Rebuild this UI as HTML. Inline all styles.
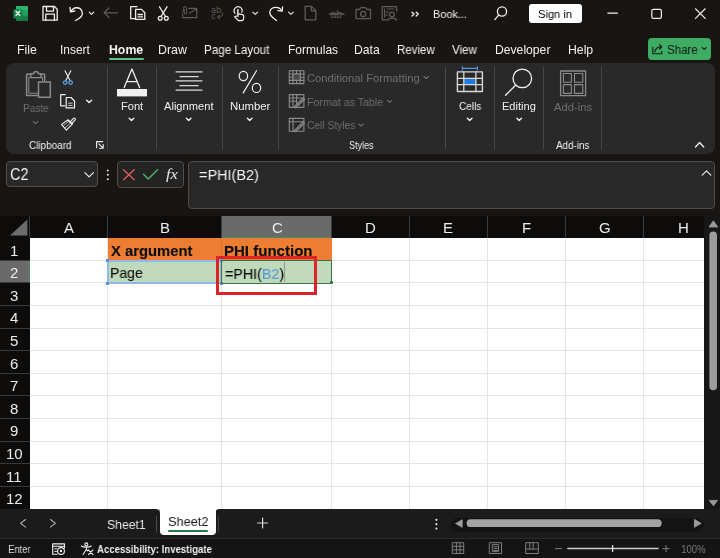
<!DOCTYPE html>
<html><head><meta charset="utf-8">
<style>
*{margin:0;padding:0;box-sizing:border-box}
html,body{width:720px;height:558px;overflow:hidden;background:#181512;font-family:"Liberation Sans",sans-serif;position:relative}
.a{position:absolute;white-space:pre;line-height:1;will-change:transform}
.t{color:#f2f2f2;font-size:12px}
.sep{position:absolute;top:67px;width:1px;height:82px;background:#474747}
.dis{color:#707070}
svg{position:absolute;overflow:visible;left:0;top:0}
</style></head><body>

<svg width="720" height="30" style="left:0;top:0">
<g fill="none" stroke-width="1.3" stroke-linejoin="round" stroke-linecap="round">
<!-- excel logo -->
<rect x="16" y="6" width="12" height="14.7" rx="1" fill="#1d9456" stroke="none"/>
<rect x="16" y="6" width="12" height="4.6" rx="1" fill="#2db46e" stroke="none"/>
<rect x="22" y="10.6" width="6" height="5" fill="#22a05f" stroke="none"/>
<rect x="16" y="15.8" width="12" height="4.9" rx="1" fill="#177a45" stroke="none"/>
<rect x="13.4" y="9.2" width="9" height="9.2" rx="1" fill="#17854b" stroke="none"/>
<path d="M16 11.2 L19.8 15.4 M19.8 11.2 L16 15.4" stroke="#f4fff8" stroke-width="1.3"/>
<!-- save -->
<path d="M43 6.5 H54.5 L57.2 9.2 V20.2 H43 Z" stroke="#f0f0f0"/>
<path d="M46.5 6.5 V11.2 H53.5 V6.5" stroke="#f0f0f0"/>
<path d="M45.8 20.2 V14.2 H54.4 V20.2" stroke="#f0f0f0"/>
<!-- undo -->
<path d="M71 11.5 C73 7 80 6 82 11.5 C83.5 15.5 80 18.5 75.5 20.5" stroke="#f0f0f0"/>
<path d="M70 7.5 L70.5 11.8 L74.8 11" stroke="#f0f0f0"/>
<path d="M89.2 12.2 L91.5 14.3 L93.8 12.2" stroke="#f0f0f0" stroke-width="1.1"/>
<!-- back arrow disabled -->
<path d="M104.2 12.8 H117.6 M109 8 L104.2 12.8 L109 17.6" stroke="#5c5c5c"/>
<!-- copy -->
<path d="M137 6.6 H130.7 V18.6 H135" stroke="#f0f0f0"/>
<path d="M135.6 9.4 H141.5 L144.8 12.7 V19.4 H135.6 Z" stroke="#f0f0f0"/>
<path d="M138 14.5 H142.5 M138 16.8 H142.5" stroke="#f0f0f0"/>
<!-- scissors -->
<path d="M159.5 6.8 L165.5 16.5 M167 6.8 L161 16.5" stroke="#f0f0f0"/>
<circle cx="160.2" cy="18.3" r="1.9" stroke="#f0f0f0"/>
<circle cx="166.3" cy="18.3" r="1.9" stroke="#f0f0f0"/>
<!-- email attach disabled -->
<path d="M182.6 13.6 V17.6 H196.8 V8.4 H189" stroke="#5c5c5c" stroke-width="1.1"/>
<path d="M189.3 13.4 L196.4 8.7 M192.5 8.5 H196.6 V12" stroke="#5c5c5c" stroke-width="1.1"/>
<path d="M183.3 12 V8.4 A1.7 1.7 0 0 1 186.7 8.4 V13 A1.2 1.2 0 0 1 184.3 13 V9.2" stroke="#5c5c5c" stroke-width="1"/>
<!-- spelling abc disabled -->
<text x="210.9" y="12.6" fill="#5c5c5c" style="font-family:'Liberation Sans';font-size:9px;letter-spacing:0.3px">ab</text>
<text x="211.2" y="19.3" fill="#5c5c5c" style="font-family:'Liberation Sans';font-size:9px">c</text>
<path d="M222.3 12.8 C223.5 15 222 17.2 218 17.2 M219.8 15.2 L217.6 17.2 L219.8 19.2" stroke="#5c5c5c" stroke-width="1"/>
<!-- touch -->
<path d="M235 13.2 A4 4 0 1 1 241.8 12.2" stroke="#f0f0f0" stroke-width="1.2"/>
<path d="M237.9 16.5 V9.6" stroke="#f0f0f0" stroke-width="1.4"/>
<path d="M238.2 13.8 L241.7 14.4 A2.1 2.1 0 0 1 243.7 16.5 V18.2 A2.5 2.5 0 0 1 241.2 20.7 H238.6 L234.6 16.9 L236.4 16" stroke="#f0f0f0" stroke-width="1.2"/>
<path d="M252.8 12.2 L255.2 14.3 L257.6 12.2" stroke="#f0f0f0" stroke-width="1.1"/>
<!-- redo -->
<path d="M281.5 10.5 C279.5 6.5 272 6 270 11 C268.5 14.5 272 17.5 276.5 20.5" stroke="#f0f0f0"/>
<path d="M282.6 6.8 L282.2 11.2 L277.8 10.6" stroke="#f0f0f0"/>
<path d="M288.5 12.2 L290.9 14.3 L293.3 12.2" stroke="#f0f0f0" stroke-width="1.1"/>
<!-- doc disabled -->
<path d="M305.2 6.4 H311.5 L315.8 10.7 V19.8 H305.2 Z M311.3 6.4 V10.8 H315.8" stroke="#5c5c5c"/>
<!-- ab strike disabled -->
<text x="330.5" y="18.2" fill="#5c5c5c" style="font-family:'Liberation Sans';font-size:10.5px">ab</text>
<path d="M329.5 14 H344" stroke="#5c5c5c"/>
<!-- camera disabled -->
<path d="M356 9.5 H359.5 L360.8 7.6 H365.5 L366.8 9.5 H370.5 V18.6 H356 Z" stroke="#5c5c5c"/>
<circle cx="363.2" cy="14" r="2.6" stroke="#5c5c5c"/>
<!-- form disabled -->
<path d="M382.2 6.6 H396.6 V11 M382.2 6.6 V19.8 H387" stroke="#5c5c5c"/>
<path d="M384.5 9 V17.5 M387 9 H394 M384.5 12 H389 M384.5 15 H388" stroke="#5c5c5c" stroke-width="1"/>
<circle cx="392" cy="14.5" r="2.3" stroke="#5c5c5c"/>
<path d="M387.8 20.2 C388.5 17.5 395.5 17.5 396.5 20.2" stroke="#5c5c5c"/>
<!-- >> -->
<path d="M412 12.2 L414 14.1 L412 16 M416.2 12.2 L418.2 14.1 L416.2 16" stroke="#f0f0f0" stroke-width="1.4"/>
<!-- search -->
<circle cx="502" cy="11.5" r="4.6" stroke="#f0f0f0"/>
<path d="M498.8 14.8 L494.8 19.6" stroke="#f0f0f0"/>
<!-- window controls -->
<path d="M607.8 13.1 H617.4" stroke="#f0f0f0" stroke-width="1.2"/>
<rect x="651.8" y="9.3" width="9.6" height="9" rx="1.6" stroke="#f0f0f0" stroke-width="1.2"/>
<path d="M695.5 8.8 L705.2 18.4 M705.2 8.8 L695.5 18.4" stroke="#f0f0f0" stroke-width="1.2"/>
</g></svg>
<div class="a" style="left:433.48px;top:8.82px;font-size:11.2px;color:#f0f0f0;font-weight:normal;transform:scaleX(0.9720);transform-origin:0.92px 0;">Book...</div>
<div class="a" style="left:529.00px;top:3.90px;width:52.70px;height:18.90px;background:#ffffff;border-radius:3px"></div>
<div class="a" style="left:538.38px;top:8.77px;font-size:11.5px;color:#000000;font-weight:normal;transform:scaleX(0.9677);transform-origin:0.52px 0;">Sign in</div>
<div class="a" style="left:17.32px;top:44.53px;font-size:11.9px;color:#f2f2f2;font-weight:normal;transform:scaleX(1.0413);transform-origin:0.98px 0;">File</div>
<div class="a" style="left:60.20px;top:44.53px;font-size:11.9px;color:#f2f2f2;font-weight:normal;transform:scaleX(1.0043);transform-origin:1.10px 0;">Insert</div>
<div class="a" style="left:108.50px;top:44.53px;font-size:11.9px;color:#f2f2f2;font-weight:bold;transform:scaleX(1.0358);transform-origin:0.80px 0;">Home</div>
<div class="a" style="left:158.32px;top:44.53px;font-size:11.9px;color:#f2f2f2;font-weight:normal;transform:scaleX(1.0439);transform-origin:0.98px 0;">Draw</div>
<div class="a" style="left:204.02px;top:44.53px;font-size:11.9px;color:#f2f2f2;font-weight:normal;transform:scaleX(0.9777);transform-origin:0.98px 0;">Page Layout</div>
<div class="a" style="left:288.02px;top:44.53px;font-size:11.9px;color:#f2f2f2;font-weight:normal;transform:scaleX(1.0106);transform-origin:0.98px 0;">Formulas</div>
<div class="a" style="left:354.32px;top:44.53px;font-size:11.9px;color:#f2f2f2;font-weight:normal;transform:scaleX(1.0265);transform-origin:0.98px 0;">Data</div>
<div class="a" style="left:396.52px;top:44.53px;font-size:11.9px;color:#f2f2f2;font-weight:normal;transform:scaleX(0.9640);transform-origin:0.98px 0;">Review</div>
<div class="a" style="left:452.05px;top:44.53px;font-size:11.9px;color:#f2f2f2;font-weight:normal;transform:scaleX(0.9740);transform-origin:0.05px 0;">View</div>
<div class="a" style="left:494.72px;top:44.53px;font-size:11.9px;color:#f2f2f2;font-weight:normal;transform:scaleX(1.0232);transform-origin:0.98px 0;">Developer</div>
<div class="a" style="left:568.22px;top:44.53px;font-size:11.9px;color:#f2f2f2;font-weight:normal;transform:scaleX(1.0305);transform-origin:0.98px 0;">Help</div>
<div class="a" style="left:108.80px;top:57.70px;width:34.50px;height:2.20px;background:#5cc28a;border-radius:1px"></div>
<div class="a" style="left:648.10px;top:37.90px;width:63.30px;height:21.70px;background:#3fac66;border-radius:4px"></div>
<div class="a" style="left:666.76px;top:43.74px;font-size:12px;color:#0f1a12;font-weight:normal;transform:scaleX(0.9598);transform-origin:0.54px 0;">Share</div>
<svg width="720" height="60" style="left:0;top:0"><g fill="none" stroke="#141414" stroke-width="1.1" stroke-linejoin="round" stroke-linecap="round">
<path d="M652.8 47.2 V53.8 H661.8 V51.2"/>
<path d="M654.8 51.8 C655.5 48.5 657.5 46.8 661.5 46.8 M659.5 44.6 L661.8 46.8 L659.5 49"/>
<path d="M702.2 47.6 L704.2 49.4 L706.2 47.6"/>
</g></svg>
<div class="a" style="left:5.60px;top:62.90px;width:709.40px;height:91.00px;background:#292929;border-radius:8px"></div>
<div class="sep" style="left:106.70px"></div>
<div class="sep" style="left:156.00px"></div>
<div class="sep" style="left:221.70px"></div>
<div class="sep" style="left:277.70px"></div>
<div class="sep" style="left:444.70px"></div>
<div class="sep" style="left:493.90px"></div>
<div class="sep" style="left:543.20px"></div>
<div class="sep" style="left:600.70px"></div>
<svg width="720" height="160" style="left:0;top:0"><g fill="none" stroke-linejoin="round" stroke-linecap="round">
<!-- paste -->
<path d="M30.5 74.3 H26.6 V95.4 H37.6 M44.6 80.8 V74.3 H41" stroke="#8a8a8a" stroke-width="1.5"/>
<path d="M30.3 77.2 H28.8 V93.2 H37.6 M42.5 80.8 V77.2 H41.2" stroke="#8a8a8a" stroke-width="1"/>
<path d="M30.8 77.6 V73.8 H33.6 A2.3 2.3 0 0 1 38.2 73.8 H41 V77.6 Z" stroke="#8a8a8a" stroke-width="1.4"/>
<rect x="38.5" y="81.9" width="11.8" height="15.4" stroke="#8a8a8a" stroke-width="1.5"/>
<path d="M33.2 121.5 L35.5 123.6 L37.8 121.5" stroke="#6f6f6f" stroke-width="1.1"/>
<!-- cut -->
<path d="M65 70.8 L70 80.5 M70.8 70.8 L65.8 80.5" stroke="#f0f0f0" stroke-width="1.1"/>
<circle cx="65.2" cy="82.6" r="1.8" stroke="#5aa0e0" stroke-width="1.3"/>
<circle cx="70.6" cy="82.6" r="1.8" stroke="#5aa0e0" stroke-width="1.3"/>
<!-- copy -->
<path d="M65.3 94.6 H60.7 V105.8 H64.8" stroke="#f0f0f0" stroke-width="1.2"/>
<path d="M66.2 97.5 H71 L74.5 101 V107.9 H66.2 Z" stroke="#f0f0f0" stroke-width="1.2"/>
<path d="M68.6 103.2 H72.2 M68.6 105.4 H72.2" stroke="#f0f0f0" stroke-width="0.8"/>
<path d="M86.6 100.3 L89.1 102.6 L91.6 100.3" stroke="#f0f0f0" stroke-width="1.4"/>
<!-- format painter -->
<path d="M67.3 120.2 L61.5 124.4 L66.4 130.2 L72 124.3 Z" stroke="#f0f0f0" stroke-width="1.1"/>
<path d="M63.6 125.6 L67.8 122.2 M65.4 127.6 L69.6 123.9" stroke="#f0f0f0" stroke-width="0.7"/>
<path d="M68 119.8 L72.6 124" stroke="#f0f0f0" stroke-width="1.2"/>
<path d="M70.2 121.8 L73.4 118.4 A1.1 1.1 0 0 1 75 120 L71.8 123.3" stroke="#f0f0f0" stroke-width="1.1"/>
<!-- launcher -->
<path d="M96.6 147.8 V141.6 H102.8" stroke="#f0f0f0" stroke-width="1.1"/>
<path d="M98.8 143.8 L103.2 148.2 M103.2 144.6 V148.2 H99.6" stroke="#f0f0f0" stroke-width="1.1"/>
<!-- font A -->
<path d="M124.2 87.6 L131.9 69 L139.6 87.6 M126.8 81.6 H137" stroke="#f0f0f0" stroke-width="1.3"/>
<rect x="117" y="89" width="30" height="7.4" fill="#f0f0f0" stroke="none"/>
<path d="M129.2 118.3 L131.5 120.6 L133.8 118.3" stroke="#f0f0f0" stroke-width="1.4"/>
<!-- alignment -->
<path d="M176.1 71.9 H202 M180 76.6 H198.2 M176.1 80.9 H202 M180 85.7 H198.2 M176.1 90.2 H202" stroke="#d8d8d8" stroke-width="1.2"/>
<path d="M186.4 118.3 L188.7 120.6 L191 118.3" stroke="#f0f0f0" stroke-width="1.4"/>
<!-- number % -->
<ellipse cx="243.4" cy="76" rx="4.2" ry="4.6" stroke="#f0f0f0" stroke-width="1.2"/>
<ellipse cx="256.5" cy="87.9" rx="4.2" ry="4.6" stroke="#f0f0f0" stroke-width="1.2"/>
<path d="M256.5 70.7 L243.2 92.9" stroke="#f0f0f0" stroke-width="1.2"/>
<path d="M247.4 118.3 L249.7 120.6 L252 118.3" stroke="#f0f0f0" stroke-width="1.4"/>
<!-- styles icons -->
<g stroke="#8a8a8a" stroke-width="1.1">
<rect x="289.3" y="70.8" width="14.6" height="12.8"/>
<path d="M293 70.8 V83.6 M296.6 70.8 V83.6 M300.2 70.8 V83.6 M289.3 74 H303.9 M289.3 77.2 H303.9 M289.3 80.4 H303.9"/>
<rect x="293" y="74" width="7.2" height="6.4" fill="#4a4a4a"/>
<rect x="289.3" y="94.6" width="14.6" height="12.8"/>
<path d="M289.3 98 H303.9 M293 94.6 V107.4 M296.6 94.6 V104 M289.3 101.2 H297"/>
<path d="M294 107 L303 98 L304.5 99.5 L295.5 108 Z" fill="#5a5a5a"/>
<rect x="289.3" y="118.4" width="14.6" height="12.8"/>
<path d="M289.3 121.8 H303.9 M293 118.4 V131.2"/>
<path d="M294 130.8 L303 121.8 L304.5 123.3 L295.5 131.8 Z" fill="#5a5a5a"/>
</g>
<path d="M424 76.5 L426.2 78.5 L428.4 76.5" stroke="#6f6f6f" stroke-width="1.1"/>
<path d="M387.5 100.3 L389.7 102.3 L391.9 100.3" stroke="#6f6f6f" stroke-width="1.1"/>
<path d="M358.8 124 L361 126 L363.2 124" stroke="#6f6f6f" stroke-width="1.1"/>
<!-- cells -->
<path d="M462.4 68.4 H477.4 M462.4 66.6 V70.2 M477.4 66.6 V70.2" stroke="#4a9ae8" stroke-width="1.1"/>
<rect x="463.8" y="78.3" width="12.1" height="6.4" fill="#1f7ae0" stroke="none"/>
<rect x="457.4" y="71.9" width="25" height="19.6" stroke="#d8d8d8" stroke-width="1.4"/>
<path d="M463.8 71.9 V91.5 M475.9 71.9 V91.5 M457.4 78.3 H482.4 M457.4 84.7 H482.4" stroke="#d8d8d8" stroke-width="1.3"/>
<path d="M467.4 118.3 L469.7 120.6 L472 118.3" stroke="#f0f0f0" stroke-width="1.4"/>
<!-- editing -->
<circle cx="522.3" cy="78.4" r="9.3" stroke="#f0f0f0" stroke-width="1.3"/>
<path d="M515.6 85.2 L505.6 95.3" stroke="#f0f0f0" stroke-width="1.3"/>
<path d="M516.9 118.3 L519.2 120.6 L521.5 118.3" stroke="#f0f0f0" stroke-width="1.4"/>
<!-- add-ins -->
<rect x="560.6" y="71" width="25" height="24.7" stroke="#8a8a8a" stroke-width="1.3"/>
<rect x="563.4" y="73.5" width="8" height="8.8" stroke="#8a8a8a" stroke-width="1.1"/>
<rect x="574.5" y="73.5" width="8.3" height="8.8" stroke="#8a8a8a" stroke-width="1.1"/>
<rect x="563.4" y="84.6" width="8" height="8.8" stroke="#8a8a8a" stroke-width="1.1"/>
<rect x="574.5" y="84.6" width="8.3" height="8.8" stroke="#8a8a8a" stroke-width="1.1"/>
<!-- collapse -->
<path d="M695.5 147 L699.6 142.5 L703.7 147" stroke="#f0f0f0" stroke-width="1.3"/>
</g></svg>
<div class="a" style="left:22.71px;top:103.36px;font-size:10.8px;color:#6f6f6f;font-weight:normal;transform:scaleX(0.9333);transform-origin:0.89px 0;">Paste</div>
<div class="a" style="left:29.16px;top:139.73px;font-size:10.6px;color:#f0f0f0;font-weight:normal;transform:scaleX(0.9355);transform-origin:0.54px 0;">Clipboard</div>
<div class="a" style="left:120.81px;top:100.66px;font-size:10.8px;color:#f0f0f0;font-weight:normal;transform:scaleX(1.0269);transform-origin:0.89px 0;">Font</div>
<div class="a" style="left:164.38px;top:100.66px;font-size:10.8px;color:#f0f0f0;font-weight:normal;transform:scaleX(1.0308);transform-origin:0.02px 0;">Alignment</div>
<div class="a" style="left:229.71px;top:100.66px;font-size:10.8px;color:#f0f0f0;font-weight:normal;transform:scaleX(1.0523);transform-origin:0.89px 0;">Number</div>
<div class="a" style="left:306.95px;top:72.86px;font-size:10.8px;color:#6f6f6f;font-weight:normal;transform:scaleX(1.0381);transform-origin:0.55px 0;">Conditional Formatting</div>
<div class="a" style="left:306.61px;top:96.61px;font-size:10.8px;color:#6f6f6f;font-weight:normal;transform:scaleX(0.9869);transform-origin:0.89px 0;">Format as Table</div>
<div class="a" style="left:306.95px;top:120.06px;font-size:10.8px;color:#6f6f6f;font-weight:normal;transform:scaleX(0.9485);transform-origin:0.55px 0;">Cell Styles</div>
<div class="a" style="left:349.02px;top:140.23px;font-size:10.6px;color:#f0f0f0;font-weight:normal;transform:scaleX(0.8482);transform-origin:0.48px 0;">Styles</div>
<div class="a" style="left:458.55px;top:100.86px;font-size:10.8px;color:#f0f0f0;font-weight:normal;transform:scaleX(0.9278);transform-origin:0.55px 0;">Cells</div>
<div class="a" style="left:502.01px;top:100.76px;font-size:10.8px;color:#f0f0f0;font-weight:normal;transform:scaleX(1.0273);transform-origin:0.89px 0;">Editing</div>
<div class="a" style="left:553.58px;top:102.16px;font-size:10.8px;color:#6f6f6f;font-weight:normal;transform:scaleX(1.0412);transform-origin:0.02px 0;">Add-ins</div>
<div class="a" style="left:555.73px;top:139.93px;font-size:10.6px;color:#f0f0f0;font-weight:normal;transform:scaleX(0.9286);transform-origin:0.02px 0;">Add-ins</div>
<div class="a" style="left:6.00px;top:161.20px;width:92.40px;height:26.40px;background:#282828;border:1px solid #4e4e4e;border-radius:4px"></div>
<div class="a" style="left:9.89px;top:166.96px;font-size:16px;color:#f2f2f2;font-weight:normal;transform:scaleX(0.9025);transform-origin:0.81px 0;">C2</div>
<div class="a" style="left:117.30px;top:161.10px;width:66.70px;height:26.70px;background:#242424;border:1px solid #4e4e4e;border-radius:4px"></div>
<div class="a" style="left:188.00px;top:161.20px;width:526.80px;height:48.40px;background:#282828;border:1px solid #4e4e4e;border-radius:4px"></div>
<div class="a" style="left:198.98px;top:167.77px;font-size:14.8px;color:#f2f2f2;font-weight:normal;transform:scaleX(0.9776);transform-origin:0.72px 0;">=PHI(B2)</div>
<svg width="720" height="240" style="left:0;top:0"><g fill="none" stroke-linejoin="round" stroke-linecap="round">
<path d="M84.8 172.6 L89.1 176.9 L93.4 172.6" stroke="#e8e8e8" stroke-width="1.2"/>
<circle cx="107.8" cy="170.4" r="1" fill="#e8e8e8"/><circle cx="107.8" cy="174.8" r="1" fill="#e8e8e8"/><circle cx="107.8" cy="179.2" r="1" fill="#e8e8e8"/>
<path d="M123.6 169.8 L134.2 179.8 M134.2 169.8 L123.6 179.8" stroke="#e35d5d" stroke-width="1.3"/>
<path d="M143.6 174.2 L148.2 179 L157.6 169.8" stroke="#52b46e" stroke-width="1.4"/>
<path d="M702.2 175.2 L706.5 170.8 L710.8 175.2" stroke="#e8e8e8" stroke-width="1.2"/>
</g></svg>
<div class="a" style="left:166.29px;top:166.50px;font-size:15px;color:#e8e8e8;font-weight:normal;font-family:'Liberation Serif';transform:scaleX(1.1068);transform-origin:0.21px 0;font-style:italic">fx</div>
<div class="a" style="left:0.00px;top:215.70px;width:703.80px;height:21.90px;background:#0d0c0b;"></div>
<div class="a" style="left:0.00px;top:237.60px;width:29.60px;height:271.20px;background:#0d0c0b;"></div>
<div class="a" style="left:221.00px;top:215.70px;width:110.25px;height:21.90px;background:#6a6a6a;"></div>
<div class="a" style="left:221.00px;top:236.60px;width:110.25px;height:1.00px;background:#4d8a5e;"></div>
<div class="a" style="left:107.00px;top:215.70px;width:1.00px;height:21.90px;background:#3c3c3c;"></div>
<div class="a" style="left:220.50px;top:215.70px;width:1.00px;height:21.90px;background:#3c3c3c;"></div>
<div class="a" style="left:330.75px;top:215.70px;width:1.00px;height:21.90px;background:#3c3c3c;"></div>
<div class="a" style="left:409.00px;top:215.70px;width:1.00px;height:21.90px;background:#3c3c3c;"></div>
<div class="a" style="left:486.90px;top:215.70px;width:1.00px;height:21.90px;background:#3c3c3c;"></div>
<div class="a" style="left:565.20px;top:215.70px;width:1.00px;height:21.90px;background:#3c3c3c;"></div>
<div class="a" style="left:642.90px;top:215.70px;width:1.00px;height:21.90px;background:#3c3c3c;"></div>
<div class="a" style="left:29.10px;top:215.70px;width:1.00px;height:21.90px;background:#3c3c3c;"></div>
<svg width="720" height="240" style="left:0;top:0"><path d="M10 235.6 L27.4 235.6 L27.4 219.4 Z" fill="#6c6c6c"/></svg>
<div class="a" style="left:64.05px;top:220.40px;font-size:15px;color:#ececec;font-weight:normal;">A</div>
<div class="a" style="left:160.28px;top:220.40px;font-size:15px;color:#ececec;font-weight:normal;">B</div>
<div class="a" style="left:271.59px;top:220.40px;font-size:15px;color:#ececec;font-weight:normal;">C</div>
<div class="a" style="left:364.58px;top:220.40px;font-size:15px;color:#ececec;font-weight:normal;">D</div>
<div class="a" style="left:442.95px;top:220.40px;font-size:15px;color:#ececec;font-weight:normal;">E</div>
<div class="a" style="left:521.80px;top:220.40px;font-size:15px;color:#ececec;font-weight:normal;">F</div>
<div class="a" style="left:598.65px;top:220.40px;font-size:15px;color:#ececec;font-weight:normal;">G</div>
<div class="a" style="left:677.58px;top:220.40px;font-size:15px;color:#ececec;font-weight:normal;">H</div>
<div class="a" style="left:0.00px;top:260.20px;width:29.60px;height:22.60px;background:#6a6a6a;"></div>
<div class="a" style="left:28.40px;top:260.20px;width:1.40px;height:22.60px;background:#4d8a5e;"></div>
<div class="a" style="left:0.00px;top:259.70px;width:29.60px;height:1.00px;background:#3a3a3a;"></div>
<div class="a" style="left:0.00px;top:282.30px;width:29.60px;height:1.00px;background:#3a3a3a;"></div>
<div class="a" style="left:0.00px;top:304.90px;width:29.60px;height:1.00px;background:#3a3a3a;"></div>
<div class="a" style="left:0.00px;top:327.50px;width:29.60px;height:1.00px;background:#3a3a3a;"></div>
<div class="a" style="left:0.00px;top:350.10px;width:29.60px;height:1.00px;background:#3a3a3a;"></div>
<div class="a" style="left:0.00px;top:372.70px;width:29.60px;height:1.00px;background:#3a3a3a;"></div>
<div class="a" style="left:0.00px;top:395.30px;width:29.60px;height:1.00px;background:#3a3a3a;"></div>
<div class="a" style="left:0.00px;top:417.90px;width:29.60px;height:1.00px;background:#3a3a3a;"></div>
<div class="a" style="left:0.00px;top:440.50px;width:29.60px;height:1.00px;background:#3a3a3a;"></div>
<div class="a" style="left:0.00px;top:463.10px;width:29.60px;height:1.00px;background:#3a3a3a;"></div>
<div class="a" style="left:0.00px;top:485.70px;width:29.60px;height:1.00px;background:#3a3a3a;"></div>
<div class="a" style="left:10.02px;top:242.50px;font-size:15px;color:#ececec;font-weight:normal;">1</div>
<div class="a" style="left:10.23px;top:265.10px;font-size:15px;color:#ececec;font-weight:normal;">2</div>
<div class="a" style="left:10.27px;top:287.70px;font-size:15px;color:#ececec;font-weight:normal;">3</div>
<div class="a" style="left:10.28px;top:310.30px;font-size:15px;color:#ececec;font-weight:normal;">4</div>
<div class="a" style="left:10.24px;top:332.90px;font-size:15px;color:#ececec;font-weight:normal;">5</div>
<div class="a" style="left:10.18px;top:355.50px;font-size:15px;color:#ececec;font-weight:normal;">6</div>
<div class="a" style="left:10.22px;top:378.10px;font-size:15px;color:#ececec;font-weight:normal;">7</div>
<div class="a" style="left:10.23px;top:400.70px;font-size:15px;color:#ececec;font-weight:normal;">8</div>
<div class="a" style="left:10.23px;top:423.30px;font-size:15px;color:#ececec;font-weight:normal;">9</div>
<div class="a" style="left:5.78px;top:445.90px;font-size:15px;color:#ececec;font-weight:normal;">10</div>
<div class="a" style="left:5.85px;top:468.50px;font-size:15px;color:#ececec;font-weight:normal;">11</div>
<div class="a" style="left:5.86px;top:491.10px;font-size:15px;color:#ececec;font-weight:normal;">12</div>
<div class="a" style="left:29.60px;top:237.60px;width:674.20px;height:271.20px;background:#ffffff;"></div>
<div class="a" style="left:107.00px;top:237.60px;width:1.00px;height:271.20px;background:#e5e5e5;"></div>
<div class="a" style="left:220.50px;top:237.60px;width:1.00px;height:271.20px;background:#e5e5e5;"></div>
<div class="a" style="left:330.75px;top:237.60px;width:1.00px;height:271.20px;background:#e5e5e5;"></div>
<div class="a" style="left:409.00px;top:237.60px;width:1.00px;height:271.20px;background:#e5e5e5;"></div>
<div class="a" style="left:486.90px;top:237.60px;width:1.00px;height:271.20px;background:#e5e5e5;"></div>
<div class="a" style="left:565.20px;top:237.60px;width:1.00px;height:271.20px;background:#e5e5e5;"></div>
<div class="a" style="left:642.90px;top:237.60px;width:1.00px;height:271.20px;background:#e5e5e5;"></div>
<div class="a" style="left:29.60px;top:259.70px;width:674.20px;height:1.00px;background:#e5e5e5;"></div>
<div class="a" style="left:29.60px;top:282.30px;width:674.20px;height:1.00px;background:#e5e5e5;"></div>
<div class="a" style="left:29.60px;top:304.90px;width:674.20px;height:1.00px;background:#e5e5e5;"></div>
<div class="a" style="left:29.60px;top:327.50px;width:674.20px;height:1.00px;background:#e5e5e5;"></div>
<div class="a" style="left:29.60px;top:350.10px;width:674.20px;height:1.00px;background:#e5e5e5;"></div>
<div class="a" style="left:29.60px;top:372.70px;width:674.20px;height:1.00px;background:#e5e5e5;"></div>
<div class="a" style="left:29.60px;top:395.30px;width:674.20px;height:1.00px;background:#e5e5e5;"></div>
<div class="a" style="left:29.60px;top:417.90px;width:674.20px;height:1.00px;background:#e5e5e5;"></div>
<div class="a" style="left:29.60px;top:440.50px;width:674.20px;height:1.00px;background:#e5e5e5;"></div>
<div class="a" style="left:29.60px;top:463.10px;width:674.20px;height:1.00px;background:#e5e5e5;"></div>
<div class="a" style="left:29.60px;top:485.70px;width:674.20px;height:1.00px;background:#e5e5e5;"></div>
<div class="a" style="left:107.50px;top:237.60px;width:223.75px;height:22.60px;background:#ed7d31;"></div>
<div class="a" style="left:107.50px;top:260.20px;width:223.75px;height:22.60px;background:#bfd9ba;"></div>
<div class="a" style="left:220.50px;top:237.60px;width:1.00px;height:22.60px;background:#d77028;"></div>
<div class="a" style="left:220.50px;top:260.20px;width:1.00px;height:22.60px;background:#b0cbab;"></div>
<div class="a" style="left:110.78px;top:244.62px;font-size:13.8px;color:#0c0c0c;font-weight:bold;transform:scaleX(1.0737);transform-origin:0.12px 0;-webkit-text-stroke:0.1px #0c0c0c">X argument</div>
<div class="a" style="left:224.38px;top:244.62px;font-size:13.8px;color:#0c0c0c;font-weight:bold;transform:scaleX(1.0909);transform-origin:0.92px 0;-webkit-text-stroke:0.1px #0c0c0c">PHI function</div>
<div class="a" style="left:110.30px;top:265.54px;font-size:14.6px;color:#111111;font-weight:normal;transform:scaleX(0.9612);transform-origin:1.20px 0;-webkit-text-stroke:0.12px #111">Page</div>
<div class="a" style="left:224.57px;top:265.70px;font-size:15px;color:#111;-webkit-text-stroke:0.12px #111;transform:scaleX(0.9497);transform-origin:0.73px 0">=PHI(<span style="color:#5b9bd5;-webkit-text-stroke:0.12px #5b9bd5">B2</span>)</div>
<div class="a" style="left:284.30px;top:262.20px;width:1.00px;height:19.50px;background:#8a9a88;"></div>
<div class="a" style="left:106.70px;top:259.60px;width:115.10px;height:24.00px;background:transparent;border:2px solid #8dbaea"></div>
<div class="a" style="left:106.20px;top:258.90px;width:2.60px;height:2.60px;background:#5a92da;"></div>
<div class="a" style="left:219.70px;top:258.90px;width:2.60px;height:2.60px;background:#5a92da;"></div>
<div class="a" style="left:106.20px;top:281.50px;width:2.60px;height:2.60px;background:#5a92da;"></div>
<div class="a" style="left:219.70px;top:281.50px;width:2.60px;height:2.60px;background:#5a92da;"></div>
<div class="a" style="left:221.10px;top:259.80px;width:110.65px;height:23.60px;background:transparent;border:1.9px solid #357544"></div>
<div class="a" style="left:329.85px;top:281.20px;width:3.40px;height:3.40px;background:#3e7d4e;"></div>
<div class="a" style="left:215.60px;top:256.10px;width:101.30px;height:38.90px;background:transparent;border:3px solid #db2329"></div>
<div class="a" style="left:703.80px;top:215.70px;width:16.20px;height:293.30px;background:#171717;"></div>
<svg width="720" height="558" style="left:0;top:0">
<path d="M709 227 L713.4 220.8 L717.8 227 Z" fill="#9a9a9a" stroke="#9a9a9a" stroke-width="0.8" stroke-linejoin="round"/>
<rect x="709.4" y="231.5" width="7.6" height="158.7" rx="3.8" fill="#9c9c9c"/>
<path d="M709.2 500.4 L717.6 500.4 L713.4 505.8 Z" fill="#9a9a9a" stroke="#9a9a9a" stroke-width="0.8" stroke-linejoin="round"/>
</svg>
<div class="a" style="left:0.00px;top:509.00px;width:720.00px;height:29.00px;background:#1b1b1b;"></div>
<div class="a" style="left:451.00px;top:517.50px;width:253.00px;height:13.50px;background:#131313;border-radius:7px"></div>
<div class="a" style="left:159.60px;top:505.00px;width:55.90px;height:29.80px;background:#ffffff;border-radius:0 0 4px 4px"></div>
<svg width="720" height="558" style="left:0;top:0">
<path d="M155.6 509 H159.6 V513 A4 4 0 0 0 155.6 509 Z" fill="#ffffff"/>
<path d="M219.5 509 H215.5 V513 A4 4 0 0 1 219.5 509 Z" fill="#ffffff"/>
<g fill="none" stroke-linecap="round" stroke-linejoin="round">
<path d="M25.6 519.5 L20.6 523.3 L25.6 527.1" stroke="#a8a8a8" stroke-width="1.1"/>
<path d="M50.4 519.5 L55.4 523.3 L50.4 527.1" stroke="#a8a8a8" stroke-width="1.1"/>
<path d="M156.5 516 V532 M218.3 516 V532" stroke="#4a4a4a" stroke-width="1"/>
<path d="M262.6 518 V528 M257.6 523 H267.6" stroke="#d8d8d8" stroke-width="1.2"/>
<path d="M455.8 523.4 L462.2 519.8 L462.2 527 Z" fill="#a0a0a0" stroke="#a0a0a0" stroke-width="0.8" stroke-linejoin="round"/>
<path d="M700.9 523.2 L694.4 519.4 L694.4 527 Z" fill="#a0a0a0" stroke="#a0a0a0" stroke-width="0.8" stroke-linejoin="round"/>
</g>
<rect x="466.6" y="519.2" width="195" height="7.9" rx="3.95" fill="#a3a3a3"/>
<circle cx="436.4" cy="519.8" r="1.1" fill="#e0e0e0"/><circle cx="436.4" cy="524.2" r="1.1" fill="#e0e0e0"/><circle cx="436.4" cy="528.6" r="1.1" fill="#e0e0e0"/>
</svg>
<div class="a" style="left:107.00px;top:518.13px;font-size:13.2px;color:#e8e8e8;font-weight:normal;transform:scaleX(0.9238);transform-origin:0.60px 0;">Sheet1</div>
<div class="a" style="left:167.60px;top:515.13px;font-size:13.2px;color:#1a1a1a;font-weight:normal;transform:scaleX(0.9662);transform-origin:0.60px 0;">Sheet2</div>
<div class="a" style="left:168.20px;top:530.30px;width:39.80px;height:1.80px;background:#237a4a;border-radius:1px"></div>
<div class="a" style="left:0.00px;top:538.00px;width:720.00px;height:20.00px;background:#141414;"></div>
<div class="a" style="left:0.00px;top:537.60px;width:720.00px;height:1.00px;background:#2c2c2c;"></div>
<div class="a" style="left:8.26px;top:543.87px;font-size:11.5px;color:#dcdcdc;font-weight:normal;transform:scaleX(0.8121);transform-origin:0.94px 0;">Enter</div>
<div class="a" style="left:96.92px;top:544.02px;font-size:11.2px;color:#f0f0f0;font-weight:bold;transform:scaleX(0.8591);transform-origin:0.28px 0;">Accessibility: Investigate</div>
<div class="a" style="left:680.95px;top:544.02px;font-size:11.2px;color:#7c7c7c;font-weight:normal;transform:scaleX(0.8506);transform-origin:0.85px 0;">100%</div>
<svg width="720" height="558" style="left:0;top:0"><g fill="none" stroke-linecap="round" stroke-linejoin="round">
<path d="M52.7 549 V543.9 H64.5 V548" stroke="#f0f0f0" stroke-width="1.1"/>
<path d="M52.7 546.3 H64.5" stroke="#f0f0f0" stroke-width="1"/>
<path d="M52.7 549 V554.2 H57" stroke="#f0f0f0" stroke-width="1.1"/>
<path d="M54.8 548.8 H56.5 M54.8 551.4 H56.5" stroke="#f0f0f0" stroke-width="1"/>
<circle cx="61" cy="551" r="3.4" stroke="#f0f0f0" stroke-width="1.1"/>
<circle cx="61" cy="551" r="1.2" fill="#f0f0f0"/>
<circle cx="86.3" cy="544.4" r="1.5" stroke="#f0f0f0" stroke-width="1.1"/>
<path d="M81.3 546 C83 547.5 89.5 547.5 91.3 546 M86.3 547.3 V549.5 L83 554.5 M86.3 549.5 L88 551" stroke="#f0f0f0" stroke-width="1.1"/>
<path d="M88.4 549.8 L93 554.6 M93 549.8 L88.4 554.6" stroke="#f0f0f0" stroke-width="1.1"/>
<g stroke="#7e7e7e" stroke-width="1">
<rect x="452.7" y="542.7" width="11" height="10.8"/>
<path d="M456.4 542.7 V553.5 M460 542.7 V553.5 M452.7 546.3 H463.7 M452.7 549.9 H463.7"/>
<rect x="489.7" y="542.7" width="11.8" height="10.8"/>
<rect x="492.7" y="544.6" width="5.8" height="7"/>
<path d="M494 546.7 H497.2 M494 548.6 H497.2 M494 550.5 H497.2"/>
<rect x="526.1" y="542.7" width="12.2" height="10.8"/>
<path d="M526.1 549.1 H538.3 M529.8 542.7 V549.1 M533.2 542.7 V549.1"/>
<path d="M555.5 548.6 H561.5 M662.9 548.6 H669.2 M666.05 545.5 V551.7"/>
</g>
<path d="M567.7 548.5 H658.1" stroke="#c8c8c8" stroke-width="1.3"/>
<path d="M612.6 545.6 V551.6" stroke="#e0e0e0" stroke-width="1.3"/>
</g></svg>
</body></html>
